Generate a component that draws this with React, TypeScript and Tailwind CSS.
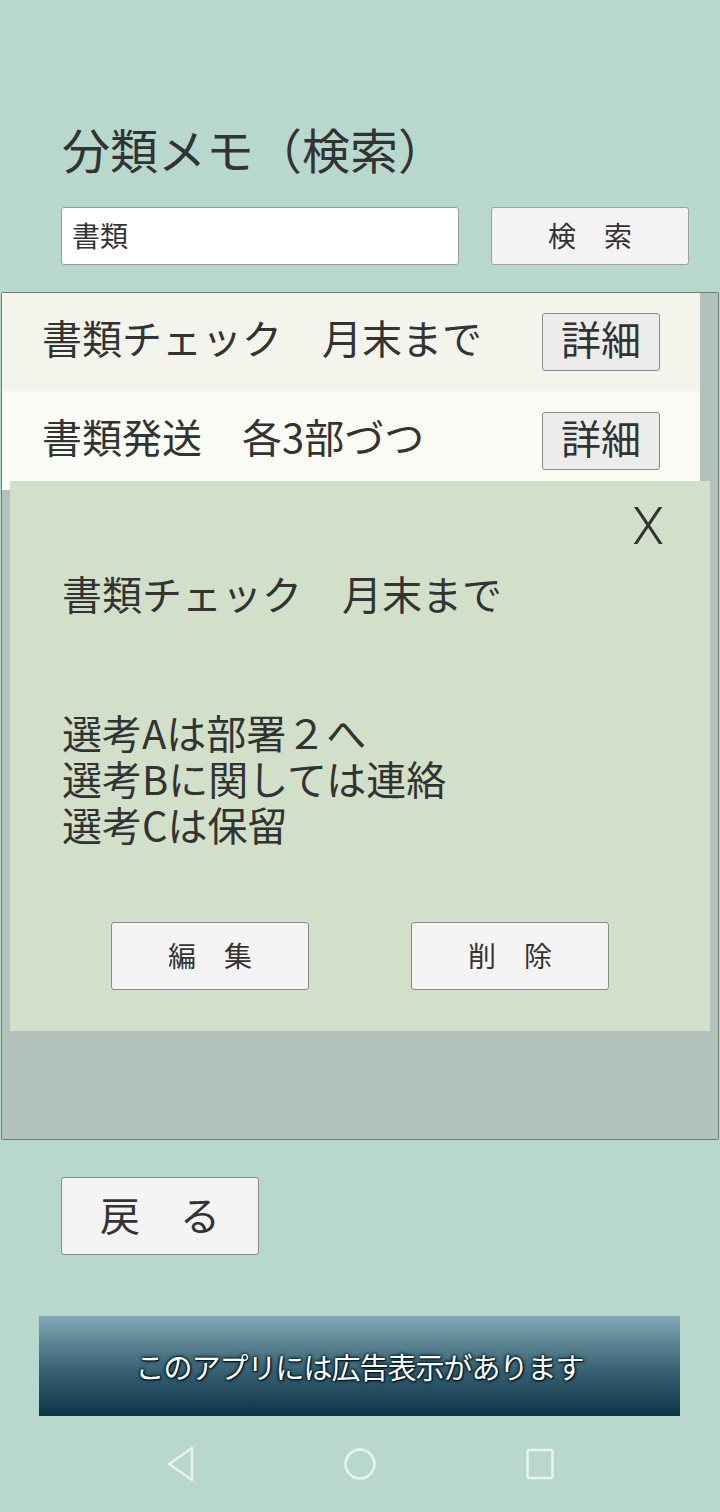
const rows = ["書類チェック　月末まで", "書類発送　各3部づつ"];

const NavBar = () => (
  <div className="flex-1 flex items-center justify-center gap-[140px]">
    <svg width="40" height="40" viewBox="0 0 40 40" fill="none" stroke="#e9f2ee" strokeWidth="2.5" strokeLinejoin="round">
      <path d="M32 4 L9 20 L32 36 Z" />
    </svg>
    <svg width="40" height="40" viewBox="0 0 40 40" fill="none" stroke="#e9f2ee" strokeWidth="2.5">
      <circle cx="20" cy="20" r="14.5" />
    </svg>
    <svg width="40" height="40" viewBox="0 0 40 40" fill="none" stroke="#e9f2ee" strokeWidth="2.5">
      <rect x="7.5" y="6" width="25" height="28" rx="2" />
    </svg>
  </div>
);

export default function App() {
  return (
    <div className="w-[720px] h-[1512px] bg-[#b8d8cd] flex flex-col overflow-hidden text-[#333] font-['Noto_Sans_CJK_JP','Noto_Sans',sans-serif]">
      <h1 className="mt-[124px] ml-[62px] text-[48px] leading-none h-[48px] font-normal">
        分類メモ（検索）
      </h1>

      <div className="mt-[35px] ml-[61px] flex gap-[32px]">
        <div className="w-[398px] h-[58px] bg-white border border-[#9a9a9a] rounded-[3px] flex items-center pl-[10px] pb-[3px] text-[28px] leading-none">
          書類
        </div>
        <button className="w-[198px] h-[58px] bg-[#f4f4f4] border border-[#a0a0a0] rounded-[3px] pb-[3px] text-[28px] leading-none">
          検　索
        </button>
      </div>

      <div className="relative mt-[27px] ml-[1px] w-[718px] h-[848px] border border-[#6f7f78] rounded-[2px] bg-[#b2c1bb]">
        {rows.map((text, i) => (
          <div
            key={text}
            className={`w-[698px] flex items-center justify-between pl-[40px] pr-[40px] ${
              i === 0 ? "h-[98px] bg-[#f3f5ec]" : "h-[99px] bg-[#fafbf5]"
            }`}
          >
            <span className="text-[40px] leading-none mb-[10px]">{text}</span>
            <button className="w-[118px] h-[58px] pb-[8px] bg-[#ececec] border border-[#8a8a8a] rounded-[3px] text-[40px] leading-none">
              詳細
            </button>
          </div>
        ))}

        {/* detail popup */}
        <div className="absolute left-[8px] top-[188px] w-[700px] h-[550px] bg-[#d2e0ca] flex flex-col">
          <div className="flex justify-end pr-[46px] pt-[20px]">
            <span className="font-['Roboto',sans-serif] font-light text-[52px] leading-none">X</span>
          </div>
          <p className="mt-[20px] pl-[52px] text-[40px] leading-none">書類チェック　月末まで</p>
          <div className="mt-[96px] pl-[52px] text-[40px] leading-[46px]">
            <p>選考Aは部署２へ</p>
            <p>選考Bに関しては連絡</p>
            <p>選考Cは保留</p>
          </div>
          <div className="mt-[75px] flex pl-[101px] gap-[102px]">
            <button className="w-[198px] h-[68px] pb-[3px] bg-[#f4f4f4] border border-[#8a8a8a] rounded-[3px] text-[28px] leading-none">
              編　集
            </button>
            <button className="w-[198px] h-[68px] pb-[3px] bg-[#f4f4f4] border border-[#8a8a8a] rounded-[3px] text-[28px] leading-none">
              削　除
            </button>
          </div>
        </div>
      </div>

      <button className="mt-[37px] ml-[61px] w-[198px] h-[78px] pb-[5px] bg-[#f4f4f4] border border-[#8a8a8a] rounded-[3px] text-[40px] leading-none">
        戻　る
      </button>

      <div className="mt-[61px] ml-[39px] w-[641px] h-[100px] bg-gradient-to-b from-[#83a9b5] via-[#3d6879] to-[#0c3347] flex items-center justify-center">
        <span className="text-white text-[29px] leading-none tracking-[-1px] [text-shadow:0_0_2px_#041a24,0_0_3px_#041a24,0_0_4px_#041a24,1px_1px_1px_#041a24]">
          このアプリには広告表示があります
        </span>
      </div>

      <NavBar />
    </div>
  );
}
